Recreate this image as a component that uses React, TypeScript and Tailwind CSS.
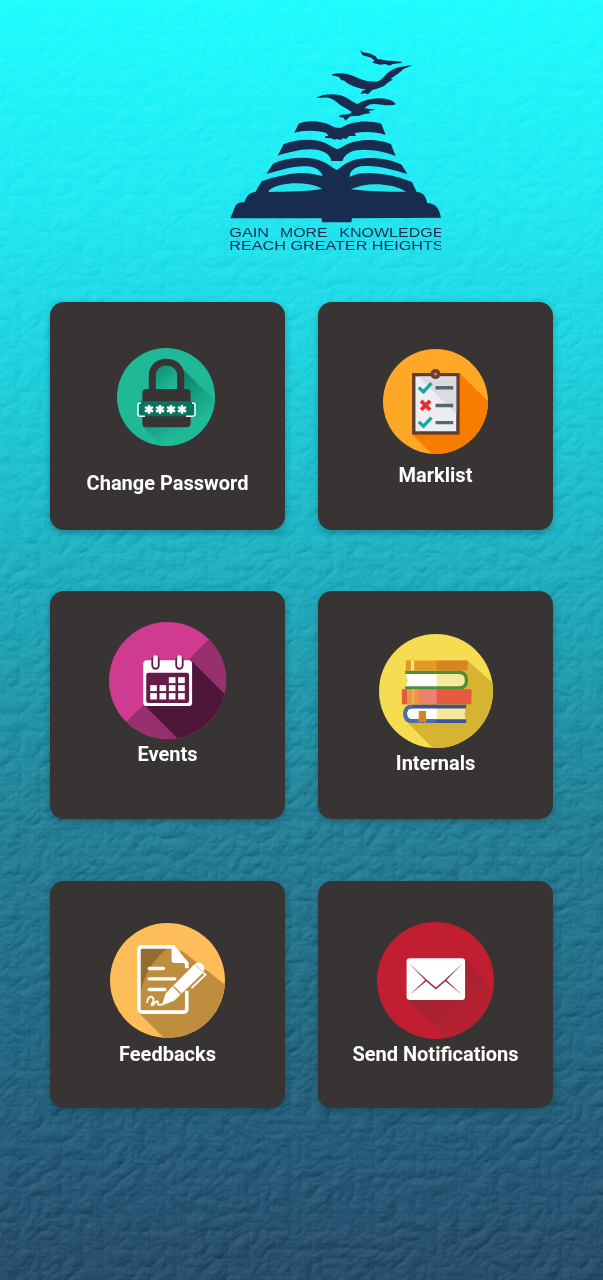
import type { ReactNode } from "react";

function Texture() {
  return (
    <svg className="pointer-events-none absolute inset-0 h-full w-full mix-blend-soft-light" aria-hidden="true">
      <filter id="plaster" x="0" y="0" width="100%" height="100%" colorInterpolationFilters="sRGB">
        <feTurbulence type="turbulence" baseFrequency="0.048 0.056" numOctaves="3" seed="8" result="noise" />
        <feDiffuseLighting in="noise" surfaceScale="2" diffuseConstant="0.7" lightingColor="#ffffff">
          <feDistantLight azimuth="235" elevation="46" />
        </feDiffuseLighting>
      </filter>
      <rect width="100%" height="100%" filter="url(#plaster)" opacity="0.6" />
    </svg>
  );
}

function Logo() {
  return (
    <svg viewBox="0 0 720 660" className="h-[220px] w-[240px]" fill="#182c4f">
      <g transform="translate(285 0)">
        <path d="M149 30 C158 39 168 38 181 41 L197 49 L202 57 C217 57 230 64 244 62 L274 65 L275 69 L248 72 L239 77 L225 72 L211 74 L190 69 L187 66 L194 62 L184 53 L158 46 Z" />
        <path d="M66 103 C86 97 111 99 132 109 C151 117 163 124 181 124 L199 125 C212 122 218 115 227 105 C242 88 264 79 307 76 L281 87 L266 100 L242 116 L249 119 L237 125 L221 139 L201 146 L187 150 L174 163 L164 160 L152 162 L157 152 L168 149 C143 145 128 139 112 130 L103 122 L93 119 L87 111 L66 106Z" />
        <path d="M18 173 C41 161 67 160 91 166 C112 170 125 187 142 192 C167 177 198 171 230 177 C245 180 254 186 257 193 C243 200 214 193 191 192 C175 193 168 200 164 205 L198 209 L176 213 L181 219 L161 223 L148 227 L121 229 L106 242 L101 233 L87 230 L90 225 L116 223 L126 216 L101 201 C81 190 77 178 55 173 C42 171 30 175 18 173Z" />
      </g>
      <path d="M238 278 L251 251 C280 239 318 243 344 254 C357 262 367 264 379 263 C399 250 430 243 463 245 C480 246 493 247 499 251 L512 285 C488 276 452 274 419 279 L423 288 L402 288 L394 297 L384 295 L377 300 L366 297 L357 299 L350 295 L331 294 L330 289 L341 287 L333 278 C304 270 264 270 238 278Z" />
      <path d="M188 347 L206 313 C242 297 291 295 323 306 C344 313 356 326 367 327 C380 326 394 309 425 304 C462 296 504 302 528 313 L542 348 C508 335 462 325 424 331 C402 335 388 346 382 363 L349 363 C347 347 331 335 310 330 C272 322 222 336 188 347Z" />
      <path d="M154 402 L174 371 C209 355 255 350 296 356 C332 363 344 378 365 390 C389 374 400 361 435 356 C477 350 530 359 560 374 L577 402 C536 389 481 373 438 379 C410 384 403 400 404 411 C432 396 459 398 492 401 C528 404 565 415 591 426 L605 456 C622 457 631 464 637 489 C659 490 672 501 678 533 L411 535 L409 547 L321 547 L320 535 L46 535 L61 498 C67 488 77 487 88 487 C96 466 105 456 121 456 L140 424 C175 411 216 402 251 399 C280 398 303 404 323 408 C320 396 306 383 287 380 C242 374 195 391 154 402Z" />
      <path fill="#25e3ed" d="M161 452 C185 431 240 426 281 433 C302 437 316 443 321 447 C278 454 219 455 161 456Z M407 448 C435 435 471 430 505 434 C537 437 561 446 573 455 C515 457 455 453 407 448Z" />
      <svg x="0" y="550" width="678" height="110" viewBox="0 550 678 110">
        <g fontFamily="Liberation Sans, sans-serif" fontSize="36">
          <text x="43" y="591" textLength="119" lengthAdjust="spacingAndGlyphs">GAIN</text>
          <text x="195" y="591" textLength="143" lengthAdjust="spacingAndGlyphs">MORE</text>
          <text x="373" y="591" textLength="312" lengthAdjust="spacingAndGlyphs">KNOWLEDGE</text>
          <text x="43" y="629" textLength="643" lengthAdjust="spacingAndGlyphs">REACH GREATER HEIGHTS</text>
        </g>
      </svg>
    </svg>
  );
}

function PasswordIcon() {
  return (
    <svg viewBox="53 38 294 294" className="mr-[3px] size-[98px] shrink-0">
      <defs>
        <clipPath id="lockDisc"><circle cx="200" cy="185" r="147" /></clipPath>
        <linearGradient id="lockShade" gradientUnits="userSpaceOnUse" x1="200" y1="150" x2="280" y2="270">
          <stop offset="0" stopColor="#0b846c" />
          <stop offset="1" stopColor="#20b998" />
        </linearGradient>
        <linearGradient id="lockInner" x1="0" y1="0" x2="0.7" y2="1">
          <stop offset="0" stopColor="#0f8b73" />
          <stop offset="1" stopColor="#20b998" />
        </linearGradient>
      </defs>
      <g clipPath="url(#lockDisc)">
        <rect x="53" y="38" width="294" height="294" fill="#20b998" />
        <path d="M238 88 L360 210 V350 H206 L130 274 L172 162Z" fill="url(#lockShade)" />
      </g>
      <path d="M169 162 V122 C169 82 234 82 234 122 V162Z" fill="url(#lockInner)" />
      <path d="M159 166 V120 C159 68 244 68 244 120 V166" fill="none" stroke="#383433" strokeWidth="21" />
      <rect x="129" y="161" width="145" height="115" rx="12" fill="#383433" />
      <path d="M118 198 H285 V243 H118Z" fill="#08735f" />
      <path d="M125 203 H121 Q116 203 116 209 V237 Q116 243 123 243 H137 M278 203 H282 Q287 203 287 209 V237 Q287 243 280 243 H260" fill="none" stroke="#fff" strokeWidth="4.5" />
      <g stroke="#fff" strokeWidth="7.5">
        {[149, 182, 215, 248].map((x) => (
          <path key={x} d={`M${x} 209V235 M${x - 12} 215L${x + 12} 229 M${x + 12} 215L${x - 12} 229`} />
        ))}
      </g>
    </svg>
  );
}

function MarklistIcon() {
  return (
    <svg viewBox="39 42 314 314" className="size-[105px] shrink-0">
      <defs><clipPath id="markDisc"><circle cx="196" cy="199" r="157" /></clipPath></defs>
      <g clipPath="url(#markDisc)">
        <rect x="39" y="42" width="314" height="314" fill="#ffa726" />
        <path d="M268 114 L370 216 V370 H199 L126 297Z" fill="#f77d00" />
      </g>
      <rect x="131" y="119" width="132" height="174" fill="#eeedf2" stroke="#5d3c33" strokeWidth="10" />
      <path d="M145 124 H258 V237Z" fill="#dcdbe1" />
      <circle cx="196" cy="117" r="15" fill="#68412f" />
      <circle cx="196" cy="117" r="4.5" fill="#c48b6d" />
      <g fill="none" strokeWidth="10">
        <path d="M146 157 L160 170 L184 144 M146 260 L160 273 L184 247" stroke="#18a899" />
        <path d="M153 197 L180 224 M180 197 L153 224" stroke="#d83537" strokeWidth="11" />
        <path d="M196 158 H249 M196 211 H249 M196 262 H249" stroke="#526970" />
      </g>
    </svg>
  );
}

function EventsIcon() {
  const cells = [[206, 201], [234, 201], [150, 225], [178, 225], [206, 225], [234, 225], [150, 249], [178, 249], [206, 249], [234, 249]];
  return (
    <svg viewBox="26 35 352 352" className="size-[117px] shrink-0">
      <defs><clipPath id="eventDisc"><circle cx="202" cy="211" r="176" /></clipPath></defs>
      <g clipPath="url(#eventDisc)">
        <rect x="26" y="35" width="352" height="352" fill="#ce3b91" />
        <path d="M330 84 L78 336 L130 390 H380 V84Z" fill="#98306f" />
        <path d="M273 151 L380 258 V390 H237 L132 285Z" fill="#4e1739" />
      </g>
      <rect x="129" y="150" width="147" height="138" rx="11" fill="#fff" />
      <rect x="138" y="188" width="129" height="91" rx="7" fill="#641d49" />
      <g strokeLinecap="round">
        <path d="M166 150 V166 M238 150 V166" stroke="#641d49" strokeWidth="25" />
        <path d="M166 142 V166 M238 142 V166" stroke="#fff" strokeWidth="14" />
      </g>
      <g fill="#fff">
        {cells.map(([x, y]) => <rect key={`${x}-${y}`} x={x} y={y} width="20" height={y === 249 ? 19 : 18} />)}
      </g>
    </svg>
  );
}

function InternalsIcon() {
  return (
    <svg viewBox="39 40 344 344" className="size-[114px] shrink-0">
      <defs><clipPath id="bookDisc"><circle cx="211" cy="212" r="172" /></clipPath></defs>
      <g clipPath="url(#bookDisc)">
        <rect x="39" y="40" width="344" height="344" fill="#f6dc50" />
        <path d="M306 120 L390 195 V390 H207 L118 300Z" fill="#d7b332" />
      </g>
      <path d="M120 120 H306 V150 H120Z" fill="#e89722" />
      <path d="M213 120 H306 V150 H213Z" fill="#d98423" />
      <path d="M135 120 H145 V150 H135Z" fill="#fae58a" />
      <path d="M118 157 H280 Q302 157 302 180 Q302 203 280 203 H118 L126 180Z" fill="#fff" />
      <path d="M213 157 H280 Q302 157 302 180 Q302 203 280 203 H213Z" fill="#f5e99b" />
      <path d="M118 156 H279 Q303 156 303 180 Q303 203 279 203 H118" fill="none" stroke="#518c3c" strokeWidth="10" />
      <path d="M108 207 H318 V252 H108Z" fill="#e65b40" />
      <path d="M124 207 H213 V252 H124Z" fill="#e98270" />
      <path d="M124 207 H159 V252 H124Z" fill="#eb9940" />
      <path d="M139 207 H145 V252 H139Z" fill="#efb264" />
      <path d="M302 258 H138 Q117 258 117 281 Q117 304 138 304 H302 L296 281Z" fill="#fff" />
      <path d="M213 258 H302 L296 281 L302 304 H213Z" fill="#f5e99b" />
      <path d="M302 259 H139 Q118 259 118 281 Q118 303 139 303 H302" fill="none" stroke="#395397" strokeWidth="11" />
      <path d="M140 259 Q118 259 118 281 Q118 303 140 303 H213" fill="none" stroke="#506caa" strokeWidth="11" />
      <path d="M159 272 H181 V309 L170 305 L159 309Z" fill="#d98423" />
    </svg>
  );
}

function FeedbackIcon() {
  return (
    <svg viewBox="30 38 346 346" className="size-[115px] shrink-0">
      <defs>
        <clipPath id="feedDisc"><circle cx="203" cy="211" r="173" /></clipPath>
        <clipPath id="feedPage"><path d="M118 112 H220 L260 154 V304 H118Z" /></clipPath>
      </defs>
      <g clipPath="url(#feedDisc)">
        <rect x="30" y="38" width="346" height="346" fill="#ffbd5a" />
        <path d="M244 119 L390 235 V390 H198 L117 309Z" fill="#be8d3e" />
      </g>
      <g clipPath="url(#feedPage)">
        <rect x="112" y="105" width="150" height="205" fill="#be8d3e" />
        <path d="M112 105 H214 C155 147 132 198 117 263 H112Z" fill="#946c31" />
      </g>
      <path d="M261 174 V160 L220 110 H127 Q117 110 117 120 V296 Q117 306 127 306 H251 Q261 306 261 296 V242" fill="none" stroke="#fff" strokeWidth="11" />
      <path d="M215 106 L267 158 H223 Q215 158 215 149Z" fill="#fff" />
      <path d="M148 175 H191 M148 206 H225 M148 238 H195" stroke="#fff" strokeWidth="10" strokeLinecap="round" />
      <path d="M186 286 L197 250 L282 164 Q297 150 309 163 Q320 177 308 190 L223 272Z" fill="#fff" />
      <path d="M221 229 L246 254" stroke="#be8d3e" strokeWidth="4" />
      <path d="M286 163 L307 184" stroke="#be8d3e" strokeWidth="2" />
      <path d="M311 188 L317 194 L275 234" fill="none" stroke="#fff" strokeWidth="6" />
      <path d="M141 278 C143 263 153 254 160 264 C165 273 152 284 156 286 C163 285 167 270 173 274 C179 279 166 288 189 283" fill="none" stroke="#fff" strokeWidth="5.5" />
    </svg>
  );
}

function MailIcon() {
  return (
    <svg viewBox="95 35 352 352" className="size-[117px] shrink-0">
      <defs>
        <clipPath id="mailDisc"><circle cx="271" cy="211" r="176" /></clipPath>
        <linearGradient id="mailShade" gradientUnits="userSpaceOnUse" x1="255" y1="225" x2="340" y2="320">
          <stop offset="0" stopColor="#a02330" /><stop offset="1" stopColor="#b42132" />
        </linearGradient>
      </defs>
      <g clipPath="url(#mailDisc)">
        <rect x="95" y="35" width="352" height="352" fill="#c21e32" />
        <path d="M357 146 L460 249 V390 H308 L185 267Z" fill="url(#mailShade)" />
      </g>
      <rect x="184" y="144" width="176" height="126" rx="10" fill="#fff" />
      <g fill="#982d38">
        <path d="M190 158 L244 208 L272 232 L300 208 L354 158 L301 213 L272 238 L243 213Z" />
        <path d="M241 209 L245 212 L192 255Z M303 209 L299 212 L352 255Z" />
      </g>
    </svg>
  );
}

function Card({ label, className, children }: { label: string; className: string; children: ReactNode }) {
  return (
    <button className={`flex h-[227.5px] w-[235px] flex-col items-center rounded-[14px] bg-[#383433] shadow-[0_3px_7px_rgba(0,30,45,0.3)] ${className}`}>
      {children}
      <span className="whitespace-nowrap text-[20px] leading-6 font-bold text-white">{label}</span>
    </button>
  );
}

export default function App() {
  return (
    <main className="relative isolate h-[1280px] w-[603px] overflow-hidden bg-linear-[180deg,#20fcff_0%,#22e8f2_16%,#20c9d6_33%,#20aabb_47%,#257f96_65%,#246883_82%,#294c6c_100%] font-['Roboto',sans-serif]">
      <Texture />
      <div className="relative flex flex-col">
        <header className="h-[302px] pt-10 pl-[215px]"><Logo /></header>
        <div className="grid grid-cols-[235px_235px] gap-x-[33px] gap-y-[61.8px] pl-[50px]">
          <Card label="Change Password" className="gap-[25px] pt-[46px]"><PasswordIcon /></Card>
          <Card label="Marklist" className="gap-[9px] pt-[47px]"><MarklistIcon /></Card>
          <Card label="Events" className="gap-[3px] pt-[30.7px]"><EventsIcon /></Card>
          <Card label="Internals" className="gap-[3px] pt-[42.7px]"><InternalsIcon /></Card>
          <Card label="Feedbacks" className="gap-1 pt-[42px]"><FeedbackIcon /></Card>
          <Card label="Send Notifications" className="gap-[3px] pt-[41px]"><MailIcon /></Card>
        </div>
      </div>
    </main>
  );
}
